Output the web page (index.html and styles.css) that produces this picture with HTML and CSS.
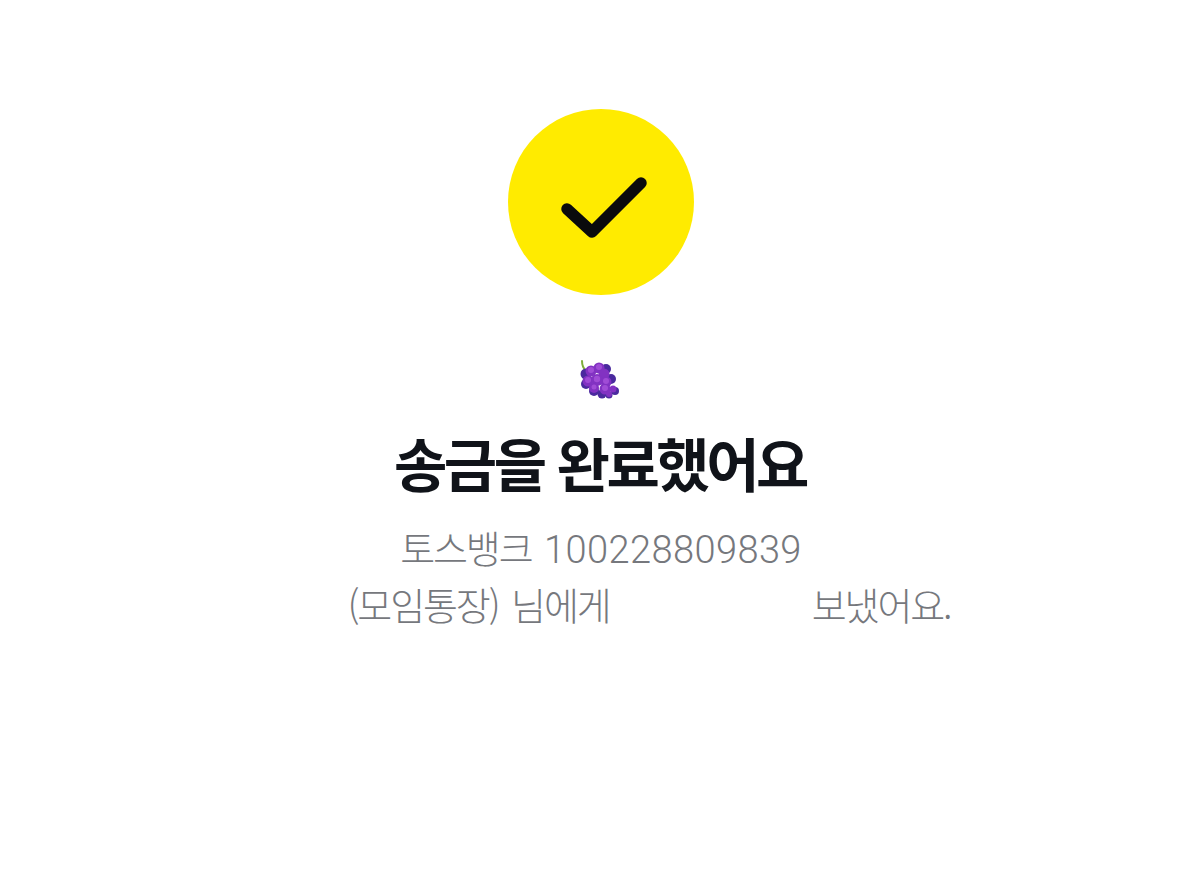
FILE: index.html
```html
<!DOCTYPE html>
<html lang="ko">
<head>
  <meta charset="UTF-8" />
  <meta name="viewport" content="width=device-width, initial-scale=1.0"/>
  <title>송금 완료</title>
  <link rel="stylesheet" href="styles.css">
</head>
<body>
  <main class="result">
    <div class="check-badge">
      <svg class="check-icon" viewBox="0 0 186 186" aria-hidden="true">
        <path d="M59 100 L84 123 L133 74" />
      </svg>
    </div>

    <svg class="grapes" viewBox="0 0 42 40" role="img" aria-label="포도">
      <path class="grapes-stem" d="M4 1 C4 5 5 8 8 11" />
      <!-- 뒤쪽 어두운 알 -->
      <circle class="g-dark" cx="8" cy="14" r="5.5" />
      <circle class="g-dark" cx="28" cy="9" r="5" />
      <circle class="g-dark" cx="8" cy="24" r="5" />
      <circle class="g-dark" cx="16" cy="31" r="5" />
      <circle class="g-dark" cx="33" cy="19" r="5" />
      <circle class="g-dark" cx="37" cy="31" r="4" />
      <circle class="g-dark" cx="24" cy="34" r="4.5" />
      <circle class="g-dark" cx="31" cy="35" r="3.5" />
      <!-- 앞쪽 알 -->
      <circle class="g-mid" cx="13" cy="11" r="5.5" />
      <circle class="g-mid" cx="21" cy="8" r="5.5" />
      <circle class="g-mid" cx="26" cy="14" r="5.5" />
      <circle class="g-mid" cx="10" cy="21" r="5.5" />
      <circle class="g-mid" cx="19" cy="20" r="6" />
      <circle class="g-mid" cx="28" cy="22" r="5.5" />
      <circle class="g-mid" cx="16" cy="28" r="5" />
      <circle class="g-mid" cx="27" cy="29" r="5.5" />
      <circle class="g-mid" cx="35" cy="29" r="3.5" />
      <circle class="g-mid" cx="31" cy="34" r="3" />
      <circle class="g-light" cx="13" cy="10" r="3" />
      <circle class="g-light" cx="21" cy="7" r="3" />
      <circle class="g-light" cx="10" cy="20" r="3" />
      <circle class="g-light" cx="19" cy="19" r="3.2" />
      <circle class="g-light" cx="28" cy="21" r="3" />
      <circle class="g-light" cx="27" cy="28" r="3" />
      <circle class="g-light" cx="16" cy="27" r="2.5" />
    </svg>

    <h1 class="title">송금을 완료했어요</h1>

    <p class="desc">
      <span class="desc-line">토스뱅크 <span class="num">100228809839</span></span>
      <span class="desc-line desc-line-offset">(모임통장) 님에게<span class="amount-gap"></span>보냈어요.</span>
    </p>
  </main>
</body>
</html>
```

FILE: styles.css
```css
* {
  box-sizing: border-box;
  margin: 0;
  padding: 0;
}

body {
  background: #fff;
  font-family: "Noto Sans CJK KR", "Noto Sans", sans-serif;
  min-height: 100vh;
}

.result {
  display: flex;
  flex-direction: column;
  align-items: center;
  padding-top: 109px;
  padding-left: 2px;
}

.check-badge {
  width: 186px;
  height: 186px;
  border-radius: 50%;
  background: #ffeb00;
}

.check-icon {
  display: block;
  width: 186px;
  height: 186px;
}

.check-icon path {
  fill: none;
  stroke: #0a0a0c;
  stroke-width: 11.5;
  stroke-linecap: round;
  stroke-linejoin: round;
}

.grapes {
  display: block;
  width: 42px;
  height: 40px;
  margin-top: 65px;
  margin-left: -4px;
}

.grapes-stem {
  fill: none;
  stroke: #7fae3c;
  stroke-width: 2;
  stroke-linecap: round;
}

.g-dark { fill: #4a2a9e; }
.g-mid { fill: #8232c2; }
.g-light { fill: #a04cd6; }

.title {
  margin-top: 26px;
  margin-left: -2px;
  color: #101319;
  font-size: 58px;
  font-weight: 700;
  line-height: 72px;
  letter-spacing: -3.45px;
}

.desc {
  margin-top: 20px;
  color: #76787d;
  font-size: 38px;
  font-weight: 300;
  line-height: 57px;
  letter-spacing: -2.1px;
  word-spacing: 4px;
  text-align: center;
}

.desc-line {
  display: block;
}

.desc-line-offset {
  padding-left: 96px;
}

.num {
  font-family: Roboto, sans-serif;
  line-height: 1;
  letter-spacing: 0.4px;
}

.amount-gap {
  display: inline-block;
  width: 202px;
}
```
